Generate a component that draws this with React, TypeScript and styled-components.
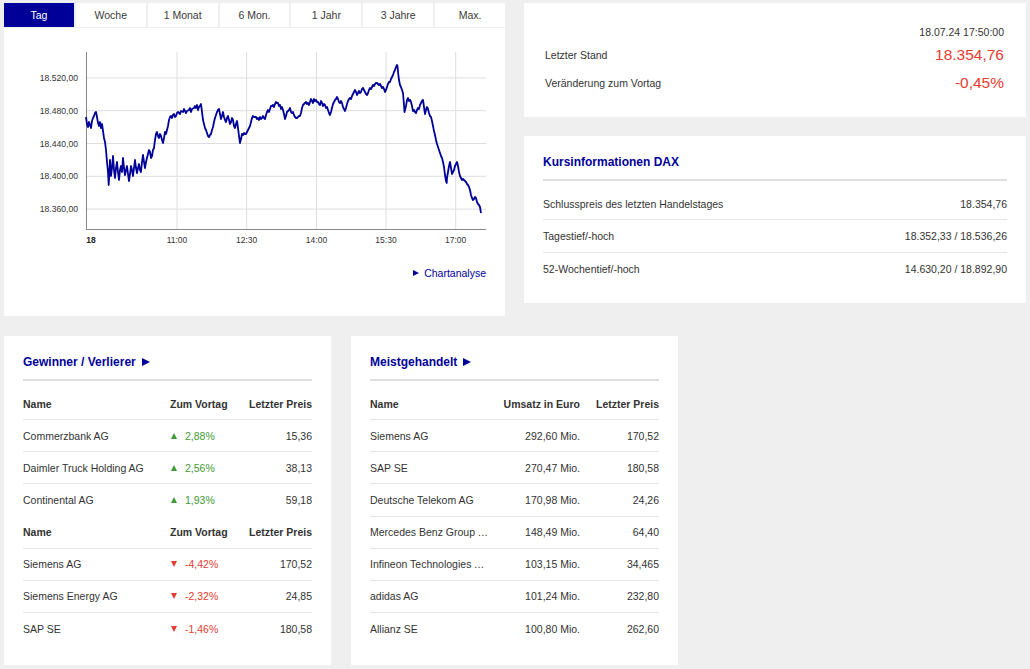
import React from 'react';
import styled, { createGlobalStyle } from 'styled-components';

// --- GLOBAL ---
const GlobalStyle = createGlobalStyle`
  html, body {
    margin: 0;
    padding: 0;
    background: #efefef;
  }
  body {
    font-family: 'Liberation Sans', Arial, Helvetica, sans-serif;
    color: #333;
    font-size: 10.5px;
  }
  * { box-sizing: border-box; }
`;

const BLUE = '#000099';
const RED = '#e83b2f';
const GREEN = '#3f9a37';

// --- LAYOUT ---
const Page = styled.div`
  width: 1030px;
  height: 669px;
  padding: 3px 4px 0 4px;
  display: flex;
  flex-direction: column;
`;

const TopRow = styled.div`
  display: grid;
  grid-template-columns: 501px 1fr;
  gap: 19px;
`;

const BottomRow = styled.div`
  display: grid;
  grid-template-columns: repeat(3, 327px);
  gap: 20px;
  margin-top: 20px;
  align-items: start;
`;

const LeftColumn = styled.div`
  display: flex;
  flex-direction: column;
  gap: 1px;
`;

const RightColumn = styled.div`
  display: flex;
  flex-direction: column;
  gap: 19px;
`;

// --- TABS ---
const TabBar = styled.div`
  display: grid;
  grid-template-columns: repeat(7, 1fr);
  gap: 2px;
  height: 24px;
`;

const Tab = styled.div<{ $active?: boolean }>`
  display: flex;
  align-items: center;
  justify-content: center;
  background: ${({ $active }) => ($active ? BLUE : '#fff')};
  color: ${({ $active }) => ($active ? '#fff' : '#3a3a3a')};
  font-size: 10.5px;
`;

// --- CARDS ---
const Card = styled.div<{ $bottom?: number }>`
  background: #fff;
  padding: 19px 19px ${({ $bottom = 20 }) => $bottom}px 19px;
`;

const ChartCard = styled.div`
  background: #fff;
  height: 288px;
  display: flex;
  flex-direction: column;
`;

const LinkRow = styled.div`
  display: flex;
  justify-content: flex-end;
  align-items: center;
  gap: 5px;
  padding-right: 19px;
  margin-top: 1px;
  height: 14px;
  color: ${BLUE};
  font-size: 10.5px;
`;

const PlayArrow = styled.span<{ $size?: number }>`
  display: inline-block;
  width: 0;
  height: 0;
  border-top: ${({ $size = 7 }) => $size / 2}px solid transparent;
  border-bottom: ${({ $size = 7 }) => $size / 2}px solid transparent;
  border-left: ${({ $size = 7 }) => $size * 0.9}px solid ${BLUE};
`;

const QuoteCard = styled.div`
  background: #fff;
  height: 114px;
  padding: 22px 22px 20px 21px;
  display: flex;
  flex-direction: column;
`;

const Stamp = styled.div`
  text-align: right;
  line-height: 14px;
  margin-bottom: 2px;
`;

const QuoteRow = styled.div`
  display: flex;
  justify-content: space-between;
  align-items: center;
  height: 28px;
`;

const BigValue = styled.span`
  color: ${RED};
  font-size: 15.5px;
`;

const Title = styled.div`
  display: flex;
  align-items: center;
  gap: 6px;
  color: ${BLUE};
  font-weight: bold;
  font-size: 12px;
  line-height: 14px;
  padding-bottom: 10px;
  border-bottom: 2px solid #dedede;
  margin-bottom: 7px;
`;

const InfoRow = styled.div<{ $last?: boolean }>`
  display: flex;
  justify-content: space-between;
  align-items: center;
  height: 32.4px;
  border-bottom: ${({ $last }) => ($last ? 'none' : '1px solid #e4e4e4')};
`;

const TableRow = styled.div<{ $cols: string; $last?: boolean; $head?: boolean }>`
  display: grid;
  grid-template-columns: ${({ $cols }) => $cols};
  align-items: center;
  height: 32.15px;
  font-weight: ${({ $head }) => ($head ? 'bold' : 'normal')};
  border-bottom: ${({ $last }) => ($last ? 'none' : '1px solid #e4e4e4')};
`;

const Cell = styled.div<{ $right?: boolean }>`
  text-align: ${({ $right }) => ($right ? 'right' : 'left')};
  white-space: nowrap;
  overflow: hidden;
  text-overflow: ellipsis;
`;

const Change = styled.div<{ $up: boolean }>`
  display: flex;
  align-items: center;
  gap: 8px;
  color: ${({ $up }) => ($up ? GREEN : RED)};
`;

const Triangle = styled.span<{ $up: boolean }>`
  display: inline-block;
  width: 0;
  height: 0;
  margin-left: 1px;
  border-left: 3.5px solid transparent;
  border-right: 3.5px solid transparent;
  ${({ $up }) =>
    $up ? `border-bottom: 6px solid ${GREEN};` : `border-top: 6px solid ${RED};`}
`;

// --- CHART DATA ---
const yOf = (p: number) => 110.7 + (18480 - p) * 0.82;

const priceTicks = [18520, 18480, 18440, 18400, 18360];
const timeTicks = [
  { label: '11:00', x: 177 },
  { label: '12:30', x: 246.7 },
  { label: '14:00', x: 316.5 },
  { label: '15:30', x: 386 },
  { label: '17:00', x: 455.7 },
];

const pts: [number, number][] = [
  [86,117],[87,124],[88,127],[89,122],[90,125],[91,128],[92,121],[93,118],[94,116],[95,113],[96,112],[97,117],[98,123],[99,126],[100,122],[101,128],[102,124],[103,131],[104,138],[105,142],[106,150],[107,162],[108,172],[108.7,185],[109.5,170],[110,160],[111,176],[112,168],[113,156],[114,170],[115,178],[116,168],[117,162],[118,172],[119,180],[120,170],[121,166],[122,172],[123,158],[124,168],[125,175],[126,170],[127,166],[128,174],[129,181],[130,174],[131,166],[132,170],[133,176],[134,168],[135,160],[136,168],[137,173],[138,168],[139,164],[140,170],[141,172],[142,162],[143,155],[144,162],[145,168],[146,162],[147,158],[148,154],[149,150],[150,152],[151,158],[152,156],[153,150],[154,148],[155,140],[156,134],[157,132],[158,136],[159,138],[160,134],[161,136],[162,140],[163,143],[164,138],[165,132],[166,134],[167,130],[168,126],[169,120],[170,117],[171,116],[172,118],[173,115],[174,114],[175,117],[176,116],[177,113],[178,112],[180,114],[181,111],[183,112],[184,109],[186,113],[187,111],[189,110],[190,108],[191,112],[192,109],[194,108],[195,106],[196,108],[197,105],[198,110],[199,107],[200,106],[201,104],[202,112],[203,120],[204,124],[205,128],[206,130],[207,133],[208,136],[209,137],[210,135],[211,134],[212,130],[213,127],[214,122],[215,118],[216,115],[217,112],[218,110],[219,109],[220,114],[221,119],[222,116],[223,112],[224,117],[225,120],[226,122],[227,118],[228,116],[229,120],[230,124],[231,122],[232,118],[233,120],[234,126],[235,128],[236,124],[237,121],[238,128],[239,136],[240,143],[241,139],[242,134],[243,135],[244,133],[245,134],[246,134],[247,132],[248,130],[249,128],[250,126],[251,122],[252,118],[253,116],[254,117],[256,117],[257,119],[258,118],[259,120],[260,117],[261,119],[262,118],[263,116],[264,118],[265,119],[266,115],[267,112],[268,110],[269,112],[270,109],[271,106],[272,106],[273,105],[274,107],[275,104],[276,102],[277,103],[278,103],[279,106],[280,105],[281,109],[282,107],[283,110],[284,114],[285,119],[286,116],[287,112],[288,111],[289,110],[290,108],[291,112],[292,113],[293,112],[294,115],[295,117],[296,118],[297,118],[298,117],[299,116],[300,116],[301,113],[302,108],[303,105],[304,104],[305,103],[306,102],[307,104],[308,103],[309,105],[310,102],[311,99],[312,101],[313,103],[314,99],[315,101],[316,100],[317,102],[318,102],[319,104],[320,105],[321,101],[322,103],[323,106],[324,104],[325,105],[326,108],[327,107],[328,110],[329,113],[330,115],[331,112],[332,108],[333,104],[334,102],[335,100],[336,99],[337,97],[338,99],[339,102],[340,103],[341,101],[342,103],[343,107],[344,109],[345,111],[346,108],[347,104],[348,101],[349,99],[350,98],[351,99],[352,96],[353,94],[354,92],[355,90],[356,92],[357,95],[358,93],[359,91],[360,93],[361,92],[362,89],[363,88],[364,90],[365,92],[366,94],[367,95],[368,93],[369,90],[370,88],[371,89],[372,87],[373,85],[374,86],[375,84],[376,83],[377,83],[378,84],[379,85],[380,84],[381,86],[382,88],[383,87],[384,89],[385,92],[386,90],[387,87],[388,84],[389,82],[390,82],[391,79],[392,77],[393,75],[394,72],[395,70],[396,67],[397,65],[397.5,66],[398,72],[399,80],[400,85],[401,87],[402,90],[403,93],[404,105],[404.5,112],[405,110],[406,106],[407,100],[408,98],[409,101],[410,100],[411,102],[412,106],[413,111],[414,110],[415,112],[416,113],[417,110],[418,108],[419,109],[420,105],[421,103],[422,101],[423,100],[424,107],[425,114],[426,110],[427,107],[428,109],[429,113],[430,116],[431,117],[432,121],[433,126],[434,131],[435,135],[436,140],[437,144],[438,147],[439,150],[440,153],[441,156],[442,158],[443,162],[444,167],[445,175],[446,181],[446.7,183],[447,178],[448,172],[449,166],[450,162],[451,168],[452,174],[453,172],[454,170],[455,166],[456,164],[457,162],[458,166],[459,172],[460,176],[461,178],[462,180],[463,179],[464,180],[465,181],[466,182],[467,184],[468,185],[469,187],[470,190],[471,195],[472,198],[473,200],[474,199],[475,197],[476,198],[477,202],[478,204],[479,205],[480,207],[480.5,210],[481,213],
];

const fmt = (n: number) => n.toLocaleString('de-DE', { minimumFractionDigits: 2 });

function IntradayChart() {
  return (
    <svg width={501} height={237} viewBox="4 28 501 237" style={{ display: 'block' }}>
      {priceTicks.map((p) => (
        <g key={p}>
          <line x1={86} x2={486} y1={yOf(p)} y2={yOf(p)} stroke="#dedede" strokeWidth={1} />
          <text x={78} y={yOf(p)} textAnchor="end" dominantBaseline="central" fontSize={8.6} fill="#333">
            {fmt(p)}
          </text>
        </g>
      ))}
      {timeTicks.map((t) => (
        <g key={t.label}>
          <line x1={t.x} x2={t.x} y1={52} y2={229} stroke="#dedede" strokeWidth={1} />
          <text x={t.x} y={240} textAnchor="middle" dominantBaseline="central" fontSize={8.5} fill="#333">
            {t.label}
          </text>
        </g>
      ))}
      <text x={91} y={240} textAnchor="middle" dominantBaseline="central" fontSize={8.5} fontWeight="bold" fill="#222">
        18
      </text>
      <line x1={86.5} x2={86.5} y1={52} y2={229.5} stroke="#888" strokeWidth={1} />
      <line x1={86} x2={486} y1={229.5} y2={229.5} stroke="#888" strokeWidth={1} />
      <polyline
        points={pts.map(([x, y]) => `${x},${y}`).join(' ')}
        fill="none"
        stroke={BLUE}
        strokeWidth={1.8}
        strokeLinejoin="round"
      />
    </svg>
  );
}

const tabs = ['Tag', 'Woche', '1 Monat', '6 Mon.', '1 Jahr', '3 Jahre', 'Max.'];

const winners = [
  { name: 'Commerzbank AG', change: '2,88%', price: '15,36' },
  { name: 'Daimler Truck Holding AG', change: '2,56%', price: '38,13' },
  { name: 'Continental AG', change: '1,93%', price: '59,18' },
];

const losers = [
  { name: 'Siemens AG', change: '-4,42%', price: '170,52' },
  { name: 'Siemens Energy AG', change: '-2,32%', price: '24,85' },
  { name: 'SAP SE', change: '-1,46%', price: '180,58' },
];

const mostTraded = [
  { name: 'Siemens AG', volume: '292,60 Mio.', price: '170,52' },
  { name: 'SAP SE', volume: '270,47 Mio.', price: '180,58' },
  { name: 'Deutsche Telekom AG', volume: '170,98 Mio.', price: '24,26' },
  { name: 'Mercedes Benz Group AG', volume: '148,49 Mio.', price: '64,40' },
  { name: 'Infineon Technologies AG', volume: '103,15 Mio.', price: '34,465' },
  { name: 'adidas AG', volume: '101,24 Mio.', price: '232,80' },
  { name: 'Allianz SE', volume: '100,80 Mio.', price: '262,60' },
];

const MOVER_COLS = '147px 72px 1fr';
const TRADED_COLS = '118.6px 91.4px 1fr';

function MoverGroup({ rows, up }: { rows: typeof winners; up: boolean }) {
  return (
    <>
      <TableRow $cols={MOVER_COLS} $head>
        <Cell>Name</Cell>
        <Cell>Zum Vortag</Cell>
        <Cell $right>Letzter Preis</Cell>
      </TableRow>
      {rows.map((r, i) => (
        <TableRow key={r.name} $cols={MOVER_COLS} $last={i === rows.length - 1}>
          <Cell>{r.name}</Cell>
          <Change $up={up}>
            <Triangle $up={up} />
            {r.change}
          </Change>
          <Cell $right>{r.price}</Cell>
        </TableRow>
      ))}
    </>
  );
}

export default function App() {
  return (
    <>
      <GlobalStyle />
      <Page>
        <TopRow>
          <LeftColumn>
            <TabBar>
              {tabs.map((t, i) => (
                <Tab key={t} $active={i === 0}>
                  {t}
                </Tab>
              ))}
            </TabBar>
            <ChartCard>
              <IntradayChart />
              <LinkRow>
                <PlayArrow $size={7} />
                Chartanalyse
              </LinkRow>
            </ChartCard>
          </LeftColumn>

          <RightColumn>
            <QuoteCard>
              <Stamp>18.07.24 17:50:00</Stamp>
              <QuoteRow>
                <span>Letzter Stand</span>
                <BigValue>18.354,76</BigValue>
              </QuoteRow>
              <QuoteRow>
                <span>Veränderung zum Vortag</span>
                <BigValue>-0,45%</BigValue>
              </QuoteRow>
            </QuoteCard>

            <Card $bottom={18}>
              <Title>Kursinformationen DAX</Title>
              <InfoRow>
                <span>Schlusspreis des letzten Handelstages</span>
                <span>18.354,76</span>
              </InfoRow>
              <InfoRow>
                <span>Tagestief/-hoch</span>
                <span>18.352,33 / 18.536,26</span>
              </InfoRow>
              <InfoRow $last>
                <span>52-Wochentief/-hoch</span>
                <span>14.630,20 / 18.892,90</span>
              </InfoRow>
            </Card>
          </RightColumn>
        </TopRow>

        <BottomRow>
          <Card>
            <Title>
              Gewinner / Verlierer <PlayArrow $size={9} />
            </Title>
            <MoverGroup rows={winners} up />
            <MoverGroup rows={losers} up={false} />
          </Card>

          <Card>
            <Title>
              Meistgehandelt <PlayArrow $size={9} />
            </Title>
            <TableRow $cols={TRADED_COLS} $head>
              <Cell>Name</Cell>
              <Cell $right>Umsatz in Euro</Cell>
              <Cell $right>Letzter Preis</Cell>
            </TableRow>
            {mostTraded.map((r, i) => (
              <TableRow key={r.name} $cols={TRADED_COLS} $last={i === mostTraded.length - 1}>
                <Cell>{r.name}</Cell>
                <Cell $right>{r.volume}</Cell>
                <Cell $right>{r.price}</Cell>
              </TableRow>
            ))}
          </Card>
        </BottomRow>
      </Page>
    </>
  );
}
